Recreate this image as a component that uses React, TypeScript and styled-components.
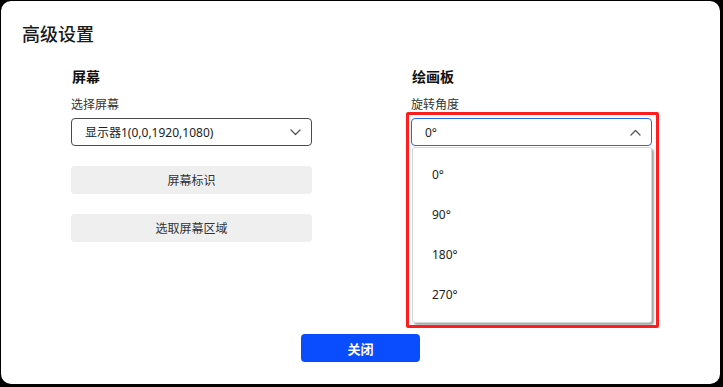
import React from 'react';
import styled, { createGlobalStyle } from 'styled-components';

const GlobalStyle = createGlobalStyle`
  html, body {
    margin: 0;
    padding: 0;
    background: #000;
  }
  body {
    font-family: "Noto Sans", "Noto Sans CJK SC", sans-serif;
    color: #222;
  }
`;

const StyledPage = styled.div`
  width: 723px;
  height: 387px;
  padding: 1px 0 0 1px;
  box-sizing: border-box;
`;

const StyledDialog = styled.div`
  width: 719px;
  height: 383px;
  background: #fff;
  border-radius: 10px;
  display: flex;
  flex-direction: column;
  box-sizing: border-box;
`;

const StyledTitle = styled.h2`
  margin: 20px 0 0 21px;
  font-size: 18px;
  line-height: 24px;
  font-weight: 500;
  font-family: "Noto Sans CJK SC", sans-serif;
  color: #1a1a1a;
`;

const StyledColumns = styled.div`
  display: grid;
  grid-template-columns: 241px 241px;
  column-gap: 99px;
  padding-left: 70px;
  margin-top: 21px;
`;

const StyledColumn = styled.div`
  display: flex;
  flex-direction: column;
`;

const StyledHeading = styled.h3`
  margin: 0;
  padding-left: 1px;
  font-size: 14px;
  line-height: 20px;
  font-weight: 700;
  font-family: "Noto Sans CJK SC", sans-serif;
  color: #111;
`;

const StyledLabel = styled.div`
  margin-top: 10px;
  font-size: 12px;
  line-height: 18px;
  color: #333;
`;

const StyledSelectWrap = styled.div`
  position: relative;
  margin-top: 4px;
`;

const StyledSelect = styled.div<{ $open?: boolean }>`
  height: 28px;
  box-sizing: border-box;
  border: 1px solid ${(p) => (p.$open ? '#2b63f0' : '#4a4a4a')};
  border-radius: 4px;
  display: flex;
  align-items: center;
  justify-content: space-between;
  padding: 0 10px 0 13px;
  font-size: 12px;
  color: #222;
`;

const StyledButton = styled.div`
  margin-top: 20px;
  height: 28px;
  border-radius: 4px;
  background: #efefef;
  display: flex;
  align-items: center;
  justify-content: center;
  font-size: 12px;
  color: #333;
`;

const StyledMenu = styled.ul`
  position: absolute;
  top: 29px;
  left: 1px;
  width: 240px;
  margin: 0;
  padding: 6px 0 8px;
  list-style: none;
  background: #fff;
  border: 1px solid #d6d6d6;
  border-radius: 3px;
  box-sizing: border-box;
  box-shadow: 2px 2px 2px rgba(0, 0, 0, 0.35);
  z-index: 2;
`;

const StyledMenuItem = styled.li`
  height: 40px;
  display: flex;
  align-items: center;
  padding-left: 19px;
  font-size: 12px;
  color: #222;
`;

const StyledHighlight = styled.div`
  position: absolute;
  left: -5px;
  top: -6px;
  width: 253px;
  height: 216px;
  border: 3px solid #ff1e1e;
  box-sizing: border-box;
  border-radius: 2px;
  pointer-events: none;
  z-index: 3;
`;

const StyledFooter = styled.div`
  margin-top: auto;
  padding-bottom: 22px;
  display: flex;
  justify-content: center;
`;

const StyledClose = styled.div`
  width: 119px;
  height: 28px;
  border-radius: 4px;
  background: #0a4cff;
  color: #fff;
  font-size: 13px;
  font-weight: 700;
  font-family: "Noto Sans CJK SC", sans-serif;
  display: flex;
  align-items: center;
  justify-content: center;
`;

const Chevron = ({ up }: { up?: boolean }) => (
  <svg width="11" height="7" viewBox="0 0 11 7" fill="none">
    <path
      d={up ? 'M1 6 L5.5 1.5 L10 6' : 'M1 1 L5.5 5.5 L10 1'}
      stroke="#555"
      strokeWidth="1.3"
      strokeLinecap="round"
      strokeLinejoin="round"
    />
  </svg>
);

const angles = ['0°', '90°', '180°', '270°'];

export default () => {
  return (
    <>
      <GlobalStyle />
      <StyledPage>
        <StyledDialog>
          <StyledTitle>高级设置</StyledTitle>
          <StyledColumns>
            <StyledColumn>
              <StyledHeading>屏幕</StyledHeading>
              <StyledLabel>选择屏幕</StyledLabel>
              <StyledSelectWrap>
                <StyledSelect>
                  <span>显示器1(0,0,1920,1080)</span>
                  <Chevron />
                </StyledSelect>
              </StyledSelectWrap>
              <StyledButton>屏幕标识</StyledButton>
              <StyledButton>选取屏幕区域</StyledButton>
            </StyledColumn>
            <StyledColumn>
              <StyledHeading>绘画板</StyledHeading>
              <StyledLabel>旋转角度</StyledLabel>
              <StyledSelectWrap>
                <StyledSelect $open>
                  <span>0°</span>
                  <Chevron up />
                </StyledSelect>
                <StyledMenu>
                  {angles.map((a) => (
                    <StyledMenuItem key={a}>{a}</StyledMenuItem>
                  ))}
                </StyledMenu>
                <StyledHighlight />
              </StyledSelectWrap>
            </StyledColumn>
          </StyledColumns>
          <StyledFooter>
            <StyledClose>关闭</StyledClose>
          </StyledFooter>
        </StyledDialog>
      </StyledPage>
    </>
  );
};
